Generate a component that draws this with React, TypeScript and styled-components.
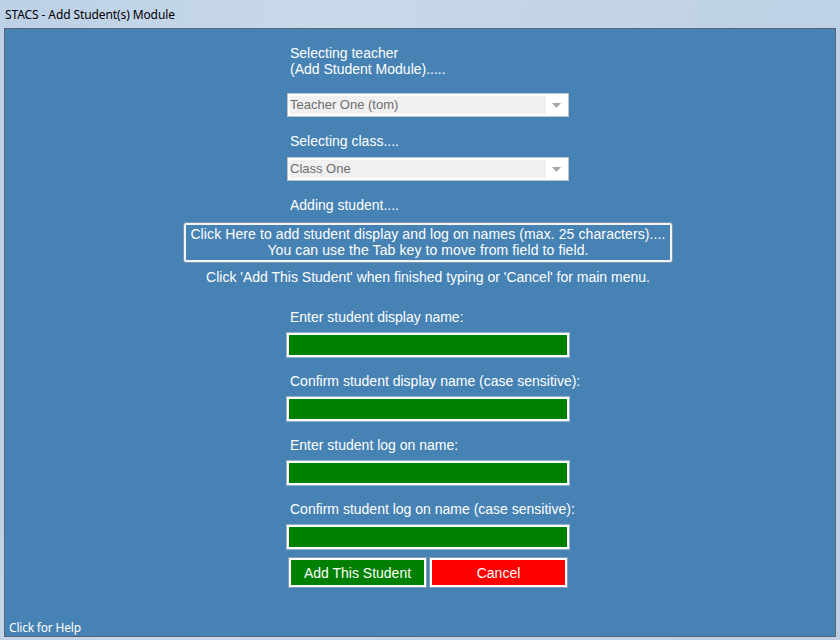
import React from "react";
import styled, { createGlobalStyle } from "styled-components";

const Global = createGlobalStyle`
  html, body { margin: 0; padding: 0; }
  body { width: 840px; height: 640px; overflow: hidden; font-family: "Liberation Sans", Arial, sans-serif; }
  #root { width: 840px; height: 640px; }
`;

const Window = styled.div`
  width: 840px;
  height: 640px;
  box-sizing: border-box;
  display: flex;
  flex-direction: column;
  background: linear-gradient(100deg, #bcd0e6 0%, #c9d9ea 35%, #c3d4e7 60%, #bdd0e5 100%);
  padding: 0 4px 3px 4px;
`;

const TitleBar = styled.div`
  height: 28px;
  display: flex;
  align-items: center;
  padding-left: 1px;
  font-family: "Noto Sans", "Open Sans", sans-serif;
  font-size: 12px;
  color: #000;
  letter-spacing: -0.1px;
`;

const Client = styled.div`
  flex: 1;
  position: relative;
  background: #4682b4;
  border: 1px solid #5a6576;
  display: flex;
  flex-direction: column;
  align-items: center;
  padding: 16px 0 0 16px;
  color: #fff;
`;

const Column = styled.div`
  width: 282px;
  display: flex;
  flex-direction: column;
`;

const Label = styled.div<{ $gap?: number }>`
  font-size: 14px;
  line-height: 16px;
  padding-left: 3px;
  margin-bottom: ${(p) => p.$gap ?? 8}px;
  white-space: nowrap;
`;

const Select = styled.div`
  height: 24px;
  box-sizing: border-box;
  border: 1px solid #b9c3cd;
  background: #fff;
  display: flex;
  align-items: center;
  padding: 2px;
  margin-bottom: 16px;
`;

const SelectValue = styled.div`
  flex: 1;
  height: 100%;
  background: #f0f0f0;
  color: #6d6d6d;
  font-size: 13px;
  line-height: 18px;
`;

const Arrow = styled.div`
  width: 20px;
  display: flex;
  justify-content: center;
  align-items: center;
`;

const InfoBox = styled.div`
  width: 488px;
  box-sizing: border-box;
  border: 2px solid #f2f4f6;
  box-shadow: 0 0 0 1px #7f96ad;
  border-radius: 2px;
  text-align: center;
  font-size: 14px;
  letter-spacing: 0.1px;
  line-height: 16px;
  padding: 1px 0 2px;
`;

const Instruction = styled.div`
  font-size: 14px;
  line-height: 16px;
  margin-top: 7px;
  margin-bottom: 24px;
  text-align: center;
`;

const GreenInput = styled.div`
  height: 24px;
  box-sizing: border-box;
  background: #008000;
  border: 2px solid #fff;
  box-shadow: 0 0 0 1px #9fb2c5;
  margin-bottom: 16px;
`;

const Buttons = styled.div`
  display: flex;
  gap: 4px;
  padding-left: 2px;
  margin-top: -7px;
`;

const Button = styled.div<{ $bg: string }>`
  width: 137px;
  height: 29px;
  box-sizing: border-box;
  background: ${(p) => p.$bg};
  border: 2px solid #fff;
  box-shadow: 0 0 0 1px #8a9cae;
  color: #fff;
  font-size: 14px;
  display: flex;
  align-items: center;
  justify-content: center;
`;

const Help = styled.div`
  position: absolute;
  left: 4px;
  bottom: 0px;
  font-family: "Noto Sans", "Open Sans", sans-serif;
  font-size: 12px;
  letter-spacing: -0.2px;
  color: #fff;
`;

const DropArrow = () => (
  <svg width="9" height="5" viewBox="0 0 9 5">
    <path d="M0 0 L9 0 L4.5 5 Z" fill="#a8a8a8" />
  </svg>
);

export default function App() {
  const fields = [
    "Enter student display name:",
    "Confirm student display name (case sensitive):",
    "Enter student log on name:",
    "Confirm student log on name (case sensitive):",
  ];
  return (
    <>
      <Global />
      <Window>
        <TitleBar>STACS - Add Student(s) Module</TitleBar>
        <Client>
          <Column>
            <Label $gap={16}>
              Selecting teacher
              <br />
              (Add Student Module).....
            </Label>
            <Select>
              <SelectValue>Teacher One (tom)</SelectValue>
              <Arrow>
                <DropArrow />
              </Arrow>
            </Select>
            <Label>Selecting class....</Label>
            <Select>
              <SelectValue>Class One</SelectValue>
              <Arrow>
                <DropArrow />
              </Arrow>
            </Select>
            <Label $gap={10}>Adding student....</Label>
          </Column>
          <InfoBox>
            Click Here to add student display and log on names (max. 25 characters)....
            <br />
            You can use the Tab key to move from field to field.
          </InfoBox>
          <Instruction>
            Click 'Add This Student' when finished typing or 'Cancel' for main menu.
          </Instruction>
          <Column>
            {fields.map((f) => (
              <React.Fragment key={f}>
                <Label>{f}</Label>
                <GreenInput />
              </React.Fragment>
            ))}
            <Buttons>
              <Button $bg="#008000">Add This Student</Button>
              <Button $bg="#ff0000">Cancel</Button>
            </Buttons>
          </Column>
          <Help>Click for Help</Help>
        </Client>
      </Window>
    </>
  );
}
